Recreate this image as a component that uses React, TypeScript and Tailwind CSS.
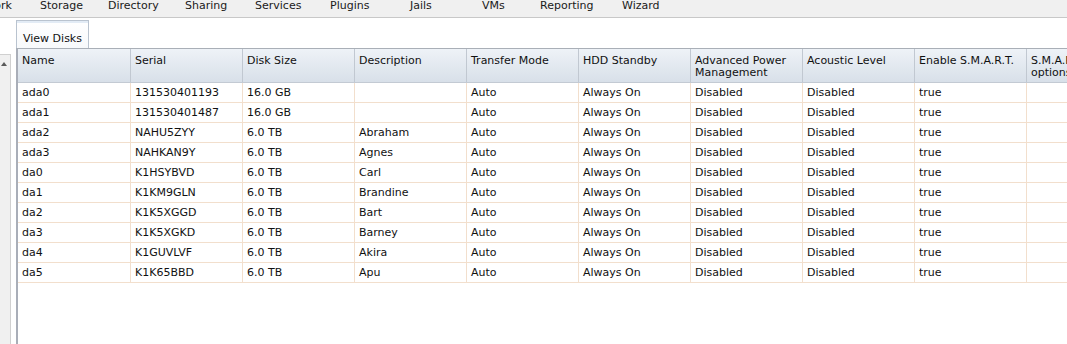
import React from "react"

const navItems = [
  { label: "Network", w: "w-[74px]" },
  { label: "Storage", w: "w-[68px]" },
  { label: "Directory", w: "w-[77px]" },
  { label: "Sharing", w: "w-[70px]" },
  { label: "Services", w: "w-[75px]" },
  { label: "Plugins", w: "w-[80px]" },
  { label: "Jails", w: "w-[72px]" },
  { label: "VMs", w: "w-[58px]" },
  { label: "Reporting", w: "w-[82px]" },
  { label: "Wizard", w: "w-[80px]" },
]

const columns = [
  "Name",
  "Serial",
  "Disk Size",
  "Description",
  "Transfer Mode",
  "HDD Standby",
  "Advanced Power Management",
  "Acoustic Level",
  "Enable S.M.A.R.T.",
  "S.M.A.R.T. extra options",
]

const disks = [
  ["ada0", "131530401193", "16.0 GB", ""],
  ["ada1", "131530401487", "16.0 GB", ""],
  ["ada2", "NAHU5ZYY", "6.0 TB", "Abraham"],
  ["ada3", "NAHKAN9Y", "6.0 TB", "Agnes"],
  ["da0", "K1HSYBVD", "6.0 TB", "Carl"],
  ["da1", "K1KM9GLN", "6.0 TB", "Brandine"],
  ["da2", "K1K5XGGD", "6.0 TB", "Bart"],
  ["da3", "K1K5XGKD", "6.0 TB", "Barney"],
  ["da4", "K1GUVLVF", "6.0 TB", "Akira"],
  ["da5", "K1K65BBD", "6.0 TB", "Apu"],
]

export default function App() {
  return (
    <div className="w-[1067px] h-[344px] overflow-hidden bg-white text-[11px] text-[#111] font-['DejaVu_Sans',sans-serif]">
      {/* Top menu */}
      <div className="h-[18px] bg-[#f0f0f0] border-b border-[#c8c8c8] overflow-hidden">
        <div className="flex ml-[-34px] mt-[-1px] leading-[13px] whitespace-nowrap text-[#1a1a1a]">
          {navItems.map(item => (
            <span key={item.label} className={`${item.w} shrink-0`}>
              {item.label}
            </span>
          ))}
        </div>
      </div>

      <div className="flex h-[326px]">
        {/* Left tree panel scrollbar */}
        <div className="w-[11px] shrink-0 flex flex-col">
          <div className="h-[36px]" />
          <div className="flex-1 bg-[#f0f0f0] border-t border-r border-[#d0d0d0]">
            <svg width="6" height="4" viewBox="0 0 6 4" className="ml-[1px] mt-[7px]">
              <path d="M0 4 L3 0 L6 4 Z" fill="#5a5a5a" />
            </svg>
          </div>
        </div>
        <div className="w-[5px] shrink-0" />

        {/* Content */}
        <div className="flex-1 flex flex-col min-w-0">
          <div className="pt-[2px] border-b border-[#a9afb7] flex">
            <div className="w-[73px] h-[28px] border-t border-l border-r border-[#b9c3cf] bg-gradient-to-b from-white to-[#f7f9fb] pl-[6px] pt-[11px] leading-[13px] text-[#111] relative">
              <div className="absolute left-0 right-0 top-0 h-[2px] bg-[#e2ebf5]" />
              <span className="relative">View Disks</span>
            </div>
          </div>

          <div className="flex-1 border-l-2 border-[#a9aeb8] overflow-hidden">
            {/* Header */}
            <div className="flex h-[34px] border-b border-[#c3cad3] bg-gradient-to-b from-[#eef2f7] to-[#d8e0e9]">
              {columns.map((c, i) => (
                <div
                  key={c}
                  className={`${i === 0 ? "w-[113px]" : "w-[112px]"} shrink-0 border-r border-[#c1c8d1] pl-[4px] pr-[2px] pt-[6px] leading-[12px]`}
                >
                  {c}
                </div>
              ))}
            </div>

            {/* Rows */}
            {disks.map(d => {
              const cells = [d[0], d[1], d[2], d[3], "Auto", "Always On", "Disabled", "Disabled", "true", ""]
              return (
                <div key={d[0]} className="flex h-[20px] border-b border-[#f2dfcd]">
                  {cells.map((v, i) => (
                    <div
                      key={i}
                      className={`${i === 0 ? "w-[113px]" : "w-[112px]"} shrink-0 border-r border-[#f2dfcd] pl-[4px] leading-[20px] whitespace-nowrap`}
                    >
                      {v}
                    </div>
                  ))}
                </div>
              )
            })}
          </div>
        </div>
      </div>
    </div>
  )
}
